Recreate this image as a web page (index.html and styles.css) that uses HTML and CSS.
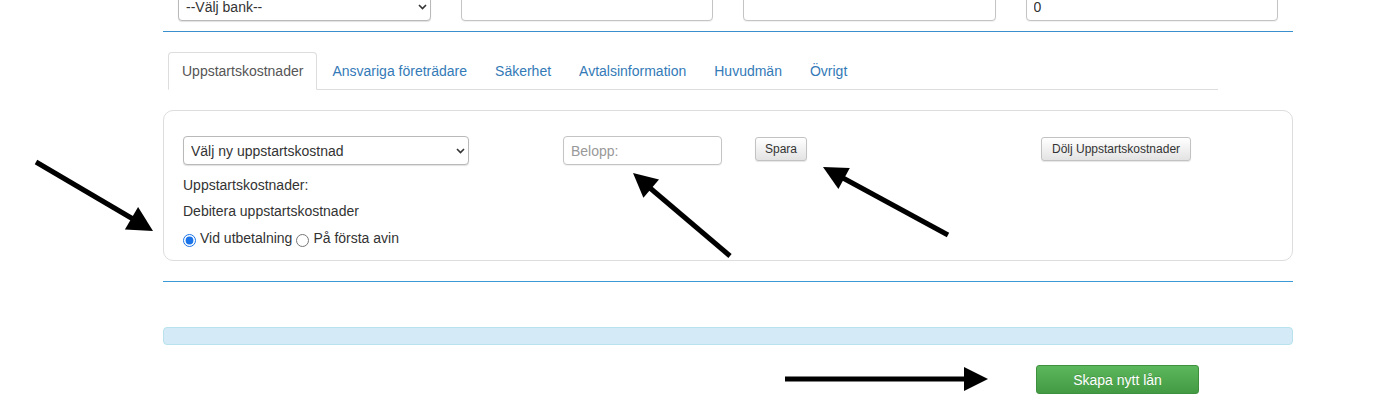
FILE: index.html
```html
<!DOCTYPE html>
<html lang="sv">
<head>
<meta charset="utf-8">
<title>Nytt lån</title>
<link rel="stylesheet" href="styles.css">
</head>
<body>
<div class="page">
  <div class="top-row">
    <div class="col">
      <div class="select-wrap">
        <select class="field"><option>--Välj bank--</option></select>
        <svg class="chev" width="9" height="6" viewBox="0 0 9 6"><path d="M1 1l3.5 3.5L8 1" fill="none" stroke="#333" stroke-width="1.6"/></svg>
      </div>
    </div>
    <div class="col"><input class="field" type="text" value=""></div>
    <div class="col"><input class="field" type="text" value=""></div>
    <div class="col"><input class="field" type="text" value="0"></div>
  </div>
  <div class="rule"></div>

  <ul class="tabs">
    <li class="tab active">Uppstartskostnader</li>
    <li class="tab">Ansvariga företrädare</li>
    <li class="tab">Säkerhet</li>
    <li class="tab">Avtalsinformation</li>
    <li class="tab">Huvudmän</li>
    <li class="tab">Övrigt</li>
  </ul>

  <div class="panel">
    <div class="form-row">
      <div class="cell c1">
        <div class="select-wrap wide">
          <select class="field"><option>Välj ny uppstartskostnad</option></select>
          <svg class="chev" width="9" height="6" viewBox="0 0 9 6"><path d="M1 1l3.5 3.5L8 1" fill="none" stroke="#333" stroke-width="1.6"/></svg>
        </div>
      </div>
      <div class="cell c2"><input class="field belopp" type="text" placeholder="Belopp:"></div>
      <div class="cell c3"><button class="btn btn-save">Spara</button></div>
      <div class="cell c4"><button class="btn">Dölj Uppstartskostnader</button></div>
    </div>
    <p class="line first">Uppstartskostnader:</p>
    <p class="line second">Debitera uppstartskostnader</p>
    <div class="radios">
      <label class="radio"><input type="radio" name="deb" checked>Vid utbetalning</label>
      <label class="radio"><input type="radio" name="deb">På första avin</label>
    </div>
  </div>

  <div class="rule rule2"></div>
  <div class="info"></div>
  <div class="actions"><button class="btn-success">Skapa nytt lån</button></div>
</div>

<svg class="arrows" width="1383" height="414" viewBox="0 0 1383 414">
  <g stroke="#000" stroke-width="5" fill="none" stroke-linecap="butt">
    <line x1="36" y1="162" x2="133" y2="219"/>
    <line x1="730" y1="256" x2="650" y2="188"/>
    <line x1="948" y1="235" x2="843" y2="178"/>
    <line x1="785" y1="379" x2="966" y2="379"/>
  </g>
  <g fill="#000">
    <polygon points="153,231 124.9,229.5 138.1,207.1"/>
    <polygon points="633,173 659,179.5 643.4,197.7"/>
    <polygon points="823,167 849.8,168 838.4,189"/>
    <polygon points="988,379 964,367 964,391"/>
  </g>
</svg>
</body>
</html>
```

FILE: styles.css
```css
* { box-sizing: border-box; }

html, body {
  margin: 0;
  padding: 0;
  background: #fff;
  font-family: "Liberation Sans", Arial, Helvetica, sans-serif;
  font-size: 14px;
  color: #333;
  overflow: hidden;
}

.page {
  width: 1130px;
  margin-left: 163px;
}

.top-row {
  display: flex;
  margin-top: -8px;
}

.col {
  width: 282.5px;
  padding: 0 15px;
}

.field {
  display: block;
  width: 100%;
  height: 29px;
  border: 1px solid #c4c4c4;
  border-radius: 4px;
  background: #fff;
  font-family: "Liberation Sans", Arial, Helvetica, sans-serif;
  font-size: 14px;
  color: #333;
  padding: 0 7px;
  outline: none;
  box-shadow: 0 1px 1px rgba(0,0,0,0.06);
}

select.field {
  appearance: none;
  -webkit-appearance: none;
  border-color: #b9b9b9;
  padding-left: 7px;
  box-shadow: 0 1px 1px rgba(0,0,0,0.12);
}

.select-wrap {
  position: relative;
}

.chev {
  position: absolute;
  right: 4px;
  top: 12px;
  pointer-events: none;
}

.rule {
  height: 1px;
  background: #3a90cc;
  margin-top: 10px;
}

.tabs {
  list-style: none;
  margin: 20px 0 0 5px;
  padding: 0;
  width: 1050px;
  display: flex;
  border-bottom: 1px solid #ddd;
}

.tab {
  margin-right: 2px;
  margin-bottom: -1px;
  padding: 8px 12px;
  line-height: 20px;
  border: 1px solid transparent;
  border-radius: 4px 4px 0 0;
  color: #337ab7;
  white-space: nowrap;
}

.tab.active {
  padding: 8px 13px;
  color: #555;
  background: #fff;
  border-color: #ddd;
  border-bottom-color: #fff;
}

.panel {
  margin-top: 20px;
  border: 1px solid #ddd;
  border-radius: 10px;
  padding: 25px 19px 12px;
}

.form-row {
  display: grid;
  grid-template-columns: 380px 192px 286px auto;
  align-items: start;
}

.wide { width: 286px; }

.belopp { width: 159px; }

.belopp::placeholder { color: #999; }

.cell.c3, .cell.c4 { padding-top: 1px; }

.btn {
  height: 24px;
  padding: 0 10px;
  font-family: "Liberation Sans", Arial, Helvetica, sans-serif;
  font-size: 12px;
  color: #333;
  background: linear-gradient(#ffffff, #e3e3e3);
  border: 1px solid #c2c2c2;
  border-radius: 3px;
  box-shadow: 0 1px 1px rgba(0,0,0,0.1);
}

.btn-save { padding: 0 9px; }

.line {
  margin: 0;
  line-height: 20px;
}

.line.first { margin-top: 10px; }
.line.second { margin-top: 6px; }

.radios {
  margin-top: 7px;
  line-height: 20px;
  display: flex;
}

.radio {
  display: inline-flex;
  align-items: center;
}

.radio input {
  margin: 4px 4px 0 0;
  width: 13px;
  height: 13px;
  accent-color: #1a73e8;
}

.radio + .radio input { margin-left: 4px; }

.rule2 {
  margin-top: 20px;
  background: #3a9ad6;
}

.info {
  margin-top: 45px;
  height: 18px;
  background: #d4eaf6;
  border: 1px solid #b9e2ef;
  border-radius: 4px;
}

.actions {
  padding-top: 20px;
  padding-left: 873px;
}

.btn-success {
  width: 163px;
  height: 29px;
  font-family: "Liberation Sans", Arial, Helvetica, sans-serif;
  font-size: 14px;
  color: #fff;
  background: linear-gradient(#5cb85c, #439a43);
  border: 1px solid #3e8f3e;
  border-radius: 3px;
  text-shadow: 0 -1px 0 rgba(0,0,0,0.15);
}

.arrows {
  position: absolute;
  left: 0;
  top: 0;
  pointer-events: none;
}
```
